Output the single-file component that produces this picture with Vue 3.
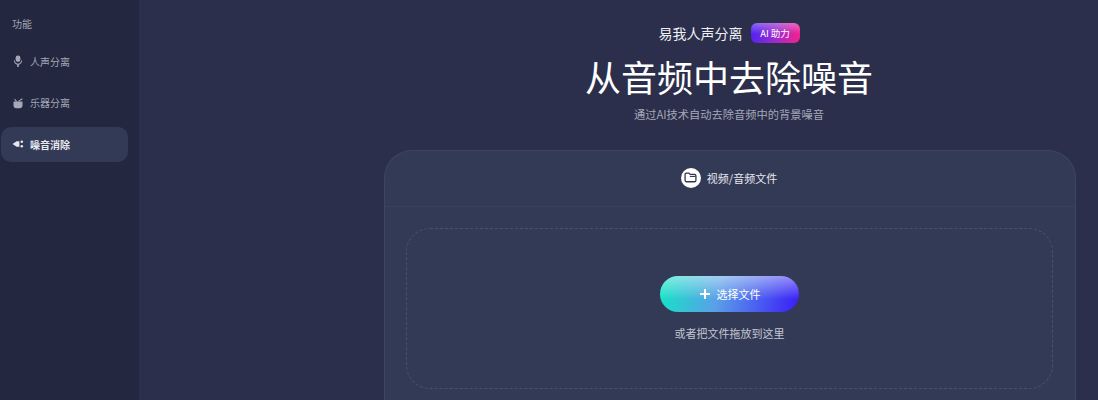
<template>
  <div class="page">
    <aside class="sidebar">
      <div class="side-title">功能</div>
      <ul class="side-list">
        <li class="side-item">
          <svg class="side-icon" viewBox="0 0 12 12">
            <rect x="3.6" y="0.5" width="4.8" height="6.5" rx="2.4" fill="currentColor" />
            <path d="M2.4 5.6a3.6 3.6 0 0 0 7.2 0" fill="none" stroke="currentColor" stroke-width="1.1" />
            <path d="M6 9v3" fill="none" stroke="currentColor" stroke-width="1.6" />
          </svg>
          <span>人声分离</span>
        </li>
        <li class="side-item">
          <svg class="side-icon" viewBox="0 0 12 12">
            <path d="M1.5 4.6h9v4.2a2.4 2.4 0 0 1-2.4 2.4H3.9a2.4 2.4 0 0 1-2.4-2.4z" fill="currentColor" />
            <path d="M4.6 4.6 2.6 2M6.4 4.4l4-2.6" fill="none" stroke="currentColor" stroke-width="1.1" />
          </svg>
          <span>乐器分离</span>
        </li>
        <li class="side-item active">
          <svg class="side-icon" viewBox="0 0 12 12">
            <path d="M0.5 6 4.6 3.2H7.4v5.6H4.6z" fill="currentColor" />
            <circle cx="9.8" cy="3.8" r="1.3" fill="currentColor" />
            <circle cx="9.8" cy="8.2" r="1.3" fill="currentColor" />
          </svg>
          <span>噪音消除</span>
        </li>
      </ul>
    </aside>

    <main class="main">
      <div class="brand-row">
        <span class="brand">易我人声分离</span>
        <span class="badge">AI 助力</span>
      </div>
      <h1 class="title">从音频中去除噪音</h1>
      <p class="subtitle">通过AI技术自动去除音频中的背景噪音</p>

      <section class="card">
        <header class="card-head">
          <span class="folder-circle">
            <svg viewBox="0 0 12 12" width="13" height="13">
              <path d="M1 3.2C1 2.5 1.5 2 2.2 2h2.4l1.1 1.2h3.9c.8 0 1.4.6 1.4 1.4v3.9c0 .8-.6 1.4-1.4 1.4H2.4C1.6 9.9 1 9.3 1 8.5z" fill="none" stroke="#2f3552" stroke-width="1.2" />
              <path d="M5.4 5h5.2" stroke="#2f3552" stroke-width="1" />
            </svg>
          </span>
          <span class="card-head-text">视频/音频文件</span>
        </header>
        <div class="card-body">
          <div class="dropzone">
            <button class="pick-btn">
              <svg viewBox="0 0 12 12" width="12" height="12">
                <path d="M6 1v10M1 6h10" stroke="#fff" stroke-width="2" />
              </svg>
              <span>选择文件</span>
            </button>
            <p class="drop-hint">或者把文件拖放到这里</p>
          </div>
        </div>
      </section>
    </main>
  </div>
</template>

<script setup>
</script>

<style scoped>
.page {
  display: flex;
  height: 400px;
  overflow: hidden;
  background: #2b2f4b;
  font-family: "Noto Sans CJK SC", "Liberation Sans", sans-serif;
  color: #fff;
}

.sidebar {
  width: 139px;
  flex-shrink: 0;
  background: #23273f;
  padding: 18px 11px 0 1px;
  box-sizing: border-box;
}

.side-title {
  padding-left: 11px;
  font-size: 10px;
  line-height: 12px;
  color: #a4a8b8;
}

.side-list {
  list-style: none;
  margin: 13.5px 0 0;
  padding: 0;
  display: flex;
  flex-direction: column;
  gap: 6.5px;
}

.side-item {
  display: flex;
  align-items: center;
  gap: 6px;
  height: 35px;
  padding-left: 11px;
  border-radius: 10px;
  font-size: 10px;
  color: #a4a8b8;
}

.side-item.active {
  background: #333a56;
  color: #e6e8ee;
  font-weight: 700;
}

.side-icon {
  width: 12px;
  height: 12px;
  flex-shrink: 0;
}

.main {
  flex: 1;
  min-width: 0;
  padding: 23px 22px 0 245px;
  display: flex;
  flex-direction: column;
  align-items: center;
}

.brand-row {
  display: flex;
  align-items: center;
  gap: 8px;
  height: 20px;
  margin-left: -2px;
}

.brand {
  font-size: 14px;
  color: #eef0f4;
}

.badge {
  display: flex;
  align-items: center;
  justify-content: center;
  width: 49px;
  height: 20px;
  border-radius: 6px;
  font-size: 9.5px;
  background:
    linear-gradient(180deg, rgba(255, 255, 255, 0.32), rgba(255, 255, 255, 0) 55%),
    linear-gradient(100deg, #4a22f5 0%, #9a2bd0 50%, #f81f8c 100%);
}

.title {
  margin: 6px 0 0;
  font-size: 36px;
  font-weight: 400;
  line-height: 54px;
  color: #fff;
  transform: translateX(-1px);
}

.subtitle {
  margin: 2px 0 0;
  font-size: 11.25px;
  line-height: 18px;
  color: #a4a8b8;
  transform: translateX(-1px);
}

.card {
  align-self: stretch;
  flex-shrink: 0;
  margin-top: 27px;
  border: 1px solid #3e4562;
  border-bottom: 0;
  border-radius: 28px 28px 0 0;
  background: #333a56;
}

.card-head {
  display: flex;
  align-items: center;
  justify-content: center;
  gap: 6px;
  height: 53px;
  padding: 0 2px 2px 0;
  border-bottom: 1px solid #3a4160;
}

.folder-circle {
  display: flex;
  align-items: center;
  justify-content: center;
  width: 20px;
  height: 20px;
  border-radius: 50%;
  background: #fff;
}

.card-head-text {
  font-size: 11px;
  color: #e6e8ee;
}

.card-body {
  padding: 21px 22px 22px 21px;
}

.dropzone {
  display: flex;
  flex-direction: column;
  align-items: center;
  height: 161px;
  padding-top: 47px;
  box-sizing: border-box;
  border: 1px dashed #4a5170;
  border-radius: 24px;
}

.pick-btn {
  display: flex;
  align-items: center;
  justify-content: center;
  gap: 6px;
  width: 139px;
  height: 36px;
  border: 0;
  border-radius: 18px;
  padding: 0;
  font-family: inherit;
  font-size: 11px;
  color: #fff;
  background:
    linear-gradient(180deg, rgba(255, 255, 255, 0.45), rgba(255, 255, 255, 0) 65%),
    linear-gradient(100deg, #12e6c4 0%, #5a9fe8 42%, #3a1cf8 100%);
}

.drop-hint {
  margin: 12px 0 0;
  font-size: 11px;
  line-height: 18px;
  color: #c3c6d2;
}
</style>

<style>
html,
body {
  overflow: hidden;
}
</style>
